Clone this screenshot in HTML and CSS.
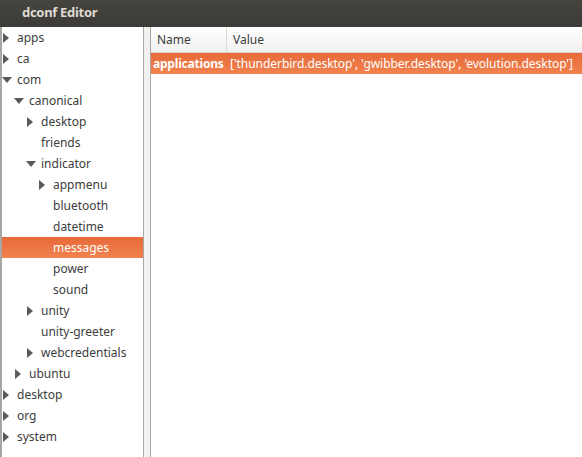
FILE: index.html
```html
<!DOCTYPE html>
<html>
<head>
<meta charset="utf-8">
<link rel="stylesheet" href="styles.css">
</head>
<body>
<div class="window">
  <div class="titlebar">dconf Editor</div>
  <div class="content">
    <div class="tree">
      <div class="row lvl0"><svg class="exp" viewBox="0 0 10 10"><path d="M1 0L7 5L1 10Z"/></svg><span>apps</span></div>
      <div class="row lvl0"><svg class="exp" viewBox="0 0 10 10"><path d="M1 0L7 5L1 10Z"/></svg><span>ca</span></div>
      <div class="row lvl0"><svg class="exp" viewBox="0 0 10 10"><path d="M0 2L10 2L5 8Z"/></svg><span>com</span></div>
      <div class="row lvl1"><svg class="exp" viewBox="0 0 10 10"><path d="M0 2L10 2L5 8Z"/></svg><span>canonical</span></div>
      <div class="row lvl2"><svg class="exp" viewBox="0 0 10 10"><path d="M1 0L7 5L1 10Z"/></svg><span>desktop</span></div>
      <div class="row lvl2"><i class="noexp"></i><span>friends</span></div>
      <div class="row lvl2"><svg class="exp" viewBox="0 0 10 10"><path d="M0 2L10 2L5 8Z"/></svg><span>indicator</span></div>
      <div class="row lvl3"><svg class="exp" viewBox="0 0 10 10"><path d="M1 0L7 5L1 10Z"/></svg><span>appmenu</span></div>
      <div class="row lvl3"><i class="noexp"></i><span>bluetooth</span></div>
      <div class="row lvl3"><i class="noexp"></i><span>datetime</span></div>
      <div class="row lvl3 selected"><i class="noexp"></i><span>messages</span></div>
      <div class="row lvl3"><i class="noexp"></i><span>power</span></div>
      <div class="row lvl3"><i class="noexp"></i><span>sound</span></div>
      <div class="row lvl2"><svg class="exp" viewBox="0 0 10 10"><path d="M1 0L7 5L1 10Z"/></svg><span>unity</span></div>
      <div class="row lvl2"><i class="noexp"></i><span>unity-greeter</span></div>
      <div class="row lvl2"><svg class="exp" viewBox="0 0 10 10"><path d="M1 0L7 5L1 10Z"/></svg><span>webcredentials</span></div>
      <div class="row lvl1"><svg class="exp" viewBox="0 0 10 10"><path d="M1 0L7 5L1 10Z"/></svg><span>ubuntu</span></div>
      <div class="row lvl0"><svg class="exp" viewBox="0 0 10 10"><path d="M1 0L7 5L1 10Z"/></svg><span>desktop</span></div>
      <div class="row lvl0"><svg class="exp" viewBox="0 0 10 10"><path d="M1 0L7 5L1 10Z"/></svg><span>org</span></div>
      <div class="row lvl0"><svg class="exp" viewBox="0 0 10 10"><path d="M1 0L7 5L1 10Z"/></svg><span>system</span></div>
    </div>
    <div class="handle"></div>
    <div class="list">
      <div class="header">
        <div class="col name">Name</div>
        <div class="col value">Value</div>
      </div>
      <div class="entry selected">
        <div class="cell name bold">applications</div>
        <div class="cell value">['thunderbird.desktop', 'gwibber.desktop', 'evolution.desktop']</div>
      </div>
    </div>
  </div>
</div>
</body>
</html>
```

FILE: styles.css
```css
html, body {
  margin: 0;
  padding: 0;
  height: 100%;
  overflow: hidden;
}
body {
  font-family: "Noto Sans", "DejaVu Sans", sans-serif;
  font-size: 12px;
  color: #3c3c3c;
  background: #f2f1f0;
}
.window {
  display: flex;
  flex-direction: column;
  height: 457px;
}
.titlebar {
  height: 27px;
  flex: none;
  background: linear-gradient(#45443f, #3c3b37);
  color: #dfdbd2;
  font-weight: bold;
  font-size: 13px;
  letter-spacing: -0.3px;
  line-height: 25px;
  padding-left: 22px;
  box-sizing: border-box;
}
.content {
  flex: 1;
  display: flex;
  min-height: 0;
}
.tree {
  width: 144px;
  flex: none;
  background: #fff;
  border-left: 2px solid #a9a7a3;
  border-right: 1px solid #a9a7a3;
  box-sizing: border-box;
  display: flex;
  flex-direction: column;
}
.row {
  height: 21px;
  display: flex;
  align-items: center;
  white-space: nowrap;
}
.row .exp {
  width: 10px;
  height: 10px;
  fill: #595959;
  flex: none;
  margin-right: 5px;
}
.row .noexp {
  width: 10px;
  flex: none;
  margin-right: 5px;
}
.lvl0 { padding-left: 0px; }
.lvl1 { padding-left: 12px; }
.lvl2 { padding-left: 24px; }
.lvl3 { padding-left: 36px; }
.selected {
  background: linear-gradient(#e8693a, #f1834f);
  color: #fff;
}
.handle {
  width: 6px;
  flex: none;
  background: #f2f1f0;
}
.list {
  flex: 1;
  background: #fff;
  border-left: 1px solid #a9a7a3;
  display: flex;
  flex-direction: column;
}
.header {
  height: 26px;
  display: flex;
  align-items: stretch;
  background: linear-gradient(#ffffff, #f2f1f0);
  border-bottom: 1px solid #d9d7d3;
  box-sizing: border-box;
}
.col {
  display: flex;
  align-items: center;
  padding-left: 6px;
}
.col.name {
  width: 69px;
  border-right: 1px solid #dcdad5;
}
.entry {
  height: 21px;
  display: flex;
  align-items: center;
  white-space: nowrap;
}
.cell.name {
  width: 79px;
  padding-left: 2px;
  box-sizing: border-box;
  letter-spacing: -0.2px;
}
.cell.value {
  letter-spacing: -0.05px;
}
.bold { font-weight: bold; }
```
